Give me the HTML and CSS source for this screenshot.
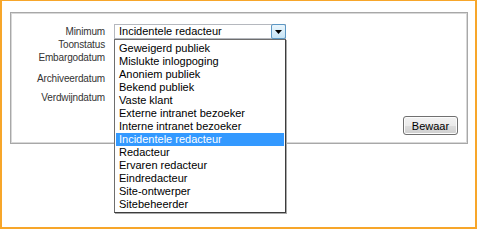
FILE: index.html
```html
<!DOCTYPE html>
<html lang="nl">
<head>
<meta charset="utf-8">
<title>Minimum</title>
<link rel="stylesheet" href="styles.css">
</head>
<body>
<div class="frame">
  <div class="panel">
    <div class="labels">
      <div class="label">Minimum</div>
      <div class="label">Toonstatus</div>
      <div class="label">Embargodatum</div>
      <div class="label label-archive">Archiveerdatum</div>
      <div class="label label-vanish">Verdwijndatum</div>
    </div>
    <div class="field">
      <div class="select">
        <span class="select-value">Incidentele redacteur</span>
        <span class="select-arrow"><svg width="7" height="4" viewBox="0 0 7 4"><path d="M0 0H7L3.5 4Z" fill="#000"/></svg></span>
        <ul class="options">
          <li class="option">Geweigerd publiek</li>
          <li class="option">Mislukte inlogpoging</li>
          <li class="option">Anoniem publiek</li>
          <li class="option">Bekend publiek</li>
          <li class="option">Vaste klant</li>
          <li class="option">Externe intranet bezoeker</li>
          <li class="option">Interne intranet bezoeker</li>
          <li class="option option-active">Incidentele redacteur</li>
          <li class="option">Redacteur</li>
          <li class="option">Ervaren redacteur</li>
          <li class="option">Eindredacteur</li>
          <li class="option">Site-ontwerper</li>
          <li class="option">Sitebeheerder</li>
        </ul>
      </div>
    </div>
    <button class="save" type="button">Bewaar</button>
  </div>
</div>
</body>
</html>
```

FILE: styles.css
```css
html, body {
  margin: 0;
  padding: 0;
  background: #ffffff;
}

.frame {
  box-sizing: border-box;
  width: 477px;
  height: 229px;
  border-left: 2px solid #f7a62a;
  border-top: 1px solid #f7a62a;
  border-right: 2px solid #f7a62a;
  border-bottom: 2px solid #f7a62a;
  padding: 11px 0 0 8px;
  background: #ffffff;
}

.panel {
  box-sizing: border-box;
  width: 458px;
  height: 132px;
  border: 1px solid #a8a8a8;
  box-shadow: inset 0 0 0 1px #d8d8d8;
  padding: 1px;
  display: flex;
  align-items: flex-start;
}

.labels {
  width: 93px;
  padding-top: 11px;
  display: flex;
  flex-direction: column;
  text-align: right;
}

.label {
  font-family: "Liberation Sans", Arial, sans-serif;
  font-size: 10px;
  letter-spacing: -0.15px;
  line-height: 13px;
  height: 13px;
  color: #333333;
  white-space: nowrap;
}

.label-archive {
  margin-top: 8px;
}

.label-vanish {
  margin-top: 6px;
}

.field {
  margin-left: 9px;
  padding-top: 10px;
}

.select {
  position: relative;
  box-sizing: border-box;
  width: 172px;
  height: 15px;
  border: 1px solid #b5b8be;
  background: #ffffff;
  display: flex;
  align-items: center;
}

.select-value {
  flex: 1;
  padding-left: 4px;
  font-family: "Liberation Sans", Arial, sans-serif;
  font-size: 11px;
  line-height: 13px;
  color: #000000;
}

.select-arrow {
  box-sizing: border-box;
  width: 15px;
  height: 15px;
  margin: -1px -1px -1px 0;
  border: 1px solid #5c97c4;
  border-radius: 2px;
  background: linear-gradient(#eaf6fd, #c7e4f5);
  display: flex;
  align-items: center;
  justify-content: center;
}

.options {
  position: absolute;
  top: 14px;
  left: -1px;
  width: 172px;
  box-sizing: border-box;
  margin: 0;
  padding: 2px 1px 1px;
  list-style: none;
  background: #ffffff;
  border: 1px solid #6e6e6e;
  border-right-color: #3c3c3c;
  border-bottom-color: #3c3c3c;
  box-shadow: 1px 1px 0 #a9a9a9;
  z-index: 2;
}

.option {
  height: 13px;
  line-height: 13px;
  padding-left: 3px;
  font-family: "Liberation Sans", Arial, sans-serif;
  font-size: 11px;
  color: #000000;
  white-space: nowrap;
}

.option-active {
  background: #3399ff;
  color: #ffffff;
}

.save {
  align-self: flex-end;
  margin: 0 8px 7px auto;
  box-sizing: border-box;
  width: 55px;
  height: 19px;
  padding: 0;
  border: 1px solid #707070;
  border-radius: 3px;
  background: linear-gradient(#f2f2f2 0%, #ebebeb 50%, #dddddd 51%, #cfcfcf 100%);
  box-shadow: inset 0 0 0 1px #fcfcfc;
  font-family: "Liberation Sans", Arial, sans-serif;
  font-size: 11px;
  color: #000000;
}
```
